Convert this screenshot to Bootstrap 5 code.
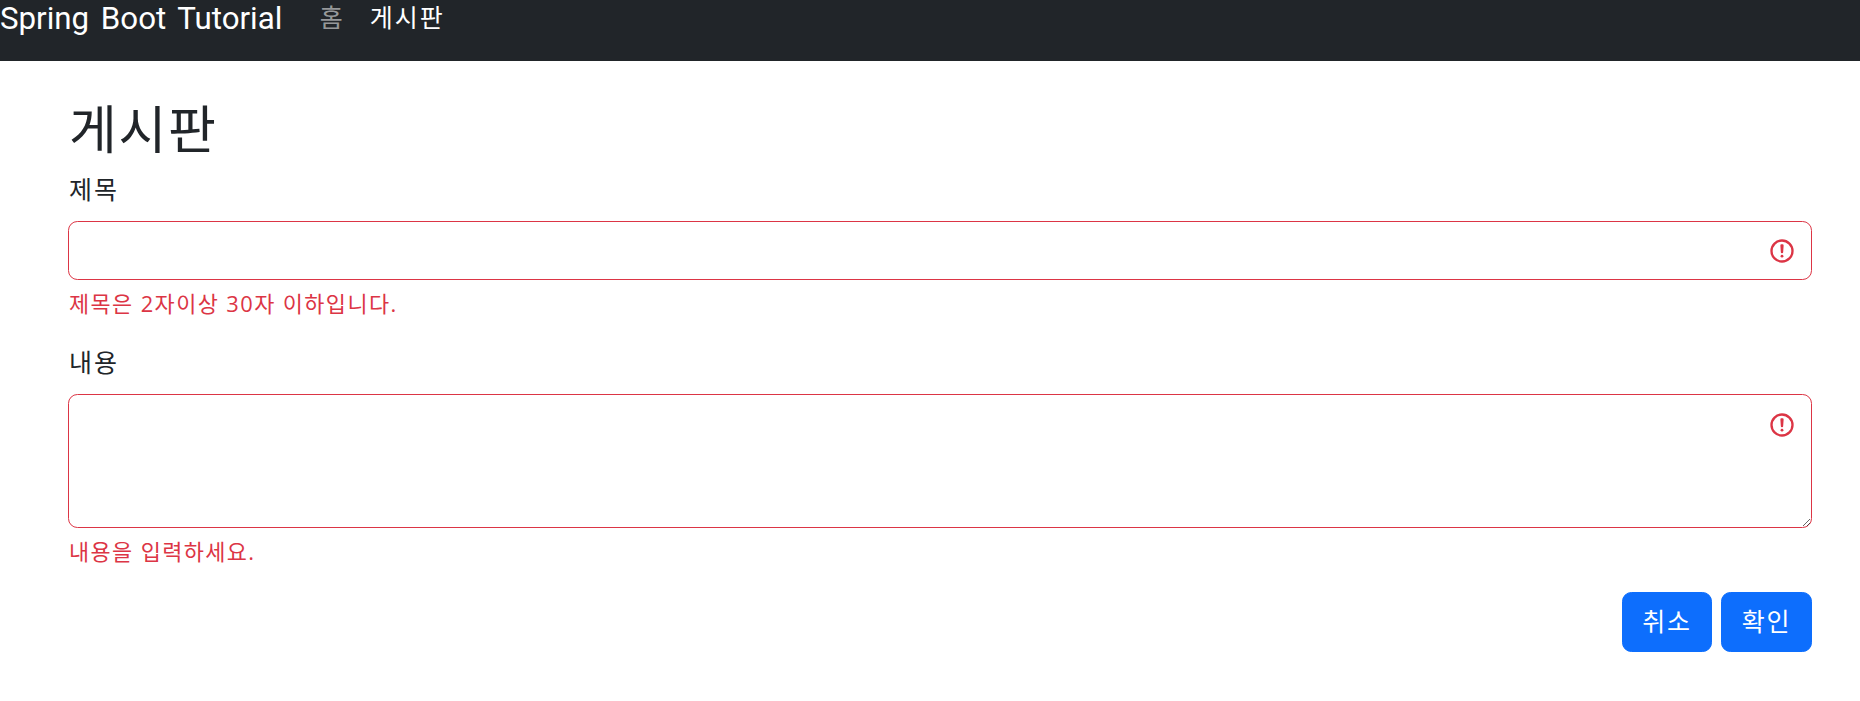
<!DOCTYPE html>
<html lang="ko">
<head>
<meta charset="utf-8">
<title>게시판</title>
<link rel="stylesheet" href="https://cdn.jsdelivr.net/npm/bootstrap@5.3.0/dist/css/bootstrap.min.css">
<style>
html { font-size: 25px; }
body { font-family: "Open Sans", "Noto Sans CJK KR", sans-serif; letter-spacing: .065em; overflow: hidden; }
.top-bar { height: 61px; padding: 0; align-items: flex-start; }
.top-bar .navbar-brand { padding: 0; font-family: Roboto, sans-serif; line-height: 37px; letter-spacing: 0; word-spacing: 4px; }
.top-bar .nav-link { padding-top: 0; padding-bottom: 0; line-height: 34px; letter-spacing: .08em; }
.page-wrap { width: 1781px; margin-left: 49px; padding-left: 19px; padding-right: 18px; }
.page-title { font-size: 52px; font-weight: 400; line-height: 60px; margin-top: 38px; margin-bottom: 12px; padding-left: 1px; }
.form-label { padding-left: 1px; letter-spacing: .08em; }
.form-control { padding-top: 9.75px; padding-bottom: 9.75px; }
.form-control.is-invalid { background-position: right 15px top 15px; }
textarea.form-control.is-invalid { background-position: right 15px top 16px; }
.invalid-feedback { display: block; color: #dc3545; padding-left: 1px; letter-spacing: .065em; margin-top: 7.5px; margin-bottom: -1.25px; }
.btn-row { gap: 9px; }
.btn-row .btn { width: 90px; height: 60px; padding-left: 0; padding-right: 0; display: flex; align-items: center; justify-content: center; letter-spacing: .065em; }
.btn-row .btn:last-child { width: 91px; }
</style>
</head>
<body>
<nav class="navbar navbar-expand navbar-dark bg-dark top-bar">
  <div class="d-flex align-items-start">
    <a class="navbar-brand" href="#">Spring Boot Tutorial</a>
    <ul class="navbar-nav">
      <li class="nav-item"><a class="nav-link" href="#">홈</a></li>
      <li class="nav-item"><a class="nav-link active" href="#">게시판</a></li>
    </ul>
  </div>
</nav>
<main class="page-wrap">
  <h2 class="page-title">게시판</h2>
  <form>
    <div class="mb-3">
      <label class="form-label" for="title">제목</label>
      <input id="title" type="text" class="form-control is-invalid">
      <div class="invalid-feedback">제목은 2자이상 30자 이하입니다.</div>
    </div>
    <div class="mb-3">
      <label class="form-label" for="content">내용</label>
      <textarea id="content" rows="3" class="form-control is-invalid"></textarea>
      <div class="invalid-feedback">내용을 입력하세요.</div>
    </div>
    <div class="d-flex justify-content-end btn-row">
      <a href="#" class="btn btn-primary">취소</a>
      <button type="submit" class="btn btn-primary">확인</button>
    </div>
  </form>
</main>
<script src="https://cdn.jsdelivr.net/npm/bootstrap@5.3.0/dist/js/bootstrap.bundle.min.js"></script>
</body>
</html>
